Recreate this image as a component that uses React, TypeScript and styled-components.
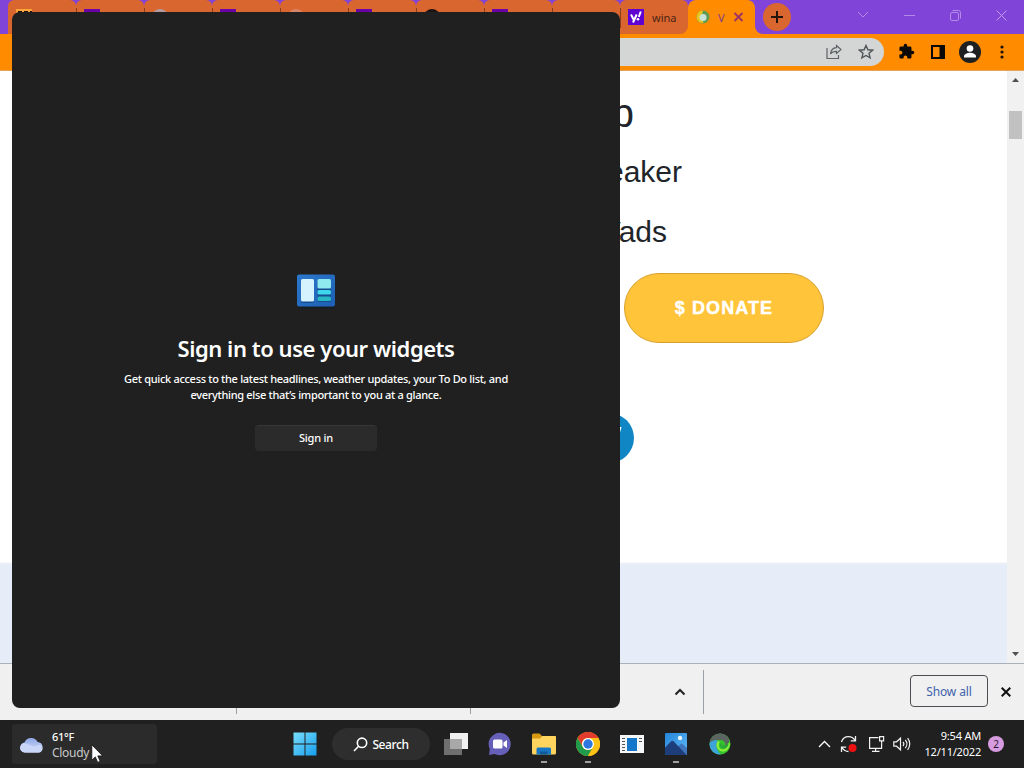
import React, {ReactNode} from 'react';
import styled, {createGlobalStyle, css} from 'styled-components';

const color = {
    frame: '#8044d8',
    tab: '#d9662f',
    toolbar: '#ff8c00',
    omnibox: '#d3d6d5',
    shelf: '#f0f0f0',
    dark: '#202020',
    darkHover: '#2b2b2b',
    band: '#e6edf8',
};

const GlobalStyle = createGlobalStyle`
    * {
        box-sizing: border-box;
    }

    body {
        margin: 0;
        overflow: hidden;
        font-family: 'Noto Sans', 'Open Sans', sans-serif;
    }

    svg {
        display: block;
        flex: none;
    }
`;

const Desktop = styled.div`
    position: relative;
    display: flex;
    flex-direction: column;
    width: 1024px;
    height: 768px;
    overflow: hidden;
    background: #fff;
`;

/* ---- browser ---- */

const TabStrip = styled.div`
    display: flex;
    flex: none;
    height: 34px;
    padding-left: 8px;
    background: ${color.frame};
`;

const Tab = styled.div<{$active?: boolean; $last?: boolean}>`
    display: flex;
    align-items: center;
    width: 68px;
    height: 34px;
    padding: 0 0 0 8px;
    border-radius: ${({$last}) => ($last ? '6px 6px 8px 0' : '6px 6px 0 0')};
    background-color: ${color.tab};
    color: #4b2413;
    font-size: 11px;

    ${({$active}) =>
        $active &&
        css`
            width: 67px;
            border-radius: 8px 8px 0 0;
            background-color: ${color.toolbar};
            color: #7d3a8c;
        `}
`;

const TabGroup = styled.div`
    display: flex;
    background: linear-gradient(${color.frame} 6px, ${color.tab} 6px, ${color.tab} 20px, ${color.toolbar} 20px);

    ${Tab} + ${Tab} {
        background-image: linear-gradient(#8a3d1c, #8a3d1c);
        background-position: 0 8px;
        background-repeat: no-repeat;
        background-size: 1px 20px;
    }
`;

const ActiveSlot = styled.div`
    background: linear-gradient(${color.frame} 16px, ${color.toolbar} 16px);
`;

const Favicon = styled.div<{$fill: string; $round?: boolean}>`
    width: 16px;
    height: 16px;
    flex: none;
    border-radius: ${({$round}) => ($round ? '50%' : '0')};
    background: ${({$fill}) => $fill};
`;

const TabTitle = styled.span`
    margin-left: 8px;
    white-space: nowrap;
`;

const StripEndBack = styled.div`
    display: flex;
    flex: 1;
    background: ${color.toolbar};
`;

const StripEnd = styled.div`
    display: flex;
    flex: 1;
    align-items: center;
    padding-left: 8px;
    border-bottom-left-radius: 8px;
    background: ${color.frame};
`;

const NewTab = styled.div`
    display: grid;
    place-items: center;
    width: 28px;
    height: 28px;
    border-radius: 50%;
    background: ${color.tab};
`;

const WindowControls = styled.div`
    display: flex;
    flex: 1;
    justify-content: flex-end;
    height: 32px;
`;

const WindowButton = styled.div`
    display: grid;
    place-items: center;
    width: 46px;
    height: 28px;
`;

const Toolbar = styled.div`
    display: flex;
    flex: none;
    align-items: center;
    height: 37px;
    padding-bottom: 1px;
    border-bottom: 1px solid #e8a35a;
    background: ${color.toolbar};
`;

const Omnibox = styled.div`
    display: flex;
    align-items: center;
    justify-content: flex-end;
    gap: 16px;
    width: 784px;
    height: 28px;
    margin-left: 100px;
    padding-right: 10px;
    border-radius: 14px;
    background: ${color.omnibox};
`;

const ToolbarIcons = styled.div`
    display: flex;
    align-items: center;
    padding-left: 6px;
`;

const ToolbarSlot = styled.div`
    display: grid;
    place-items: center;
    width: 32px;
    height: 32px;
`;

const Viewport = styled.div`
    display: flex;
    flex: none;
    height: 592px;
`;

const Page = styled.main`
    flex: 1;
    background: linear-gradient(#fff 491px, #eef1f6 492px, ${color.band} 494px);
    color: #212529;
    font-family: 'Liberation Sans', Arial, sans-serif;
    overflow: hidden;
`;

const PageLine = styled.div<{$size: number; $right: number; $height: number}>`
    width: ${({$right}) => $right}px;
    height: ${({$height}) => $height}px;
    font-size: ${({$size}) => $size}px;
    line-height: ${({$height}) => $height}px;
    text-align: right;
    white-space: nowrap;
`;

const Donate = styled.div`
    display: grid;
    place-items: center;
    width: 200px;
    height: 70px;
    margin: -2px 0 70px 624px;
    border: 1px solid #d9a02c;
    border-radius: 35px;
    background: #ffc439;
    color: #fff;
    font-size: 18px;
    font-weight: bold;
    letter-spacing: 1.1px;
    -webkit-text-stroke: 0.4px #fff;
`;

const SocialCircle = styled.div`
    width: 50px;
    height: 50px;
    margin-left: 584px;
    padding: 14px 0 0 34px;
    border-radius: 50%;
    background: #1186c4;
`;

const ScrollBar = styled.div`
    display: flex;
    flex-direction: column;
    align-items: center;
    justify-content: space-between;
    width: 17px;
    padding: 7px 0;
    background: #f1f1f1;
`;

const ScrollThumb = styled.div`
    width: 13px;
    height: 28px;
    margin: 29px 0 auto 0;
    background: #c1c1c1;
`;

const DownloadShelf = styled.div`
    display: flex;
    flex: none;
    align-items: center;
    height: 57px;
    padding-right: 13px;
    border-top: 1px solid #a9b0b6;
    background: ${color.shelf};
`;

const DownloadItem = styled.div<{$width: number}>`
    display: flex;
    align-items: center;
    justify-content: flex-end;
    width: ${({$width}) => $width}px;
    height: 44px;
    margin-bottom: 1px;
    padding-right: 17px;
    border-right: 1px solid #9aa0a6;
`;

const ShowAll = styled.div`
    display: grid;
    place-items: center;
    width: 78px;
    height: 32px;
    margin: 0 13px 2px auto;
    border: 1px solid #4a4d51;
    border-radius: 4px;
    color: #3f62ab;
    font-size: 12px;
    letter-spacing: -0.1px;
`;

/* ---- widgets flyout ---- */

const WidgetPanel = styled.section`
    position: absolute;
    top: 12px;
    left: 12px;
    display: flex;
    flex-direction: column;
    align-items: center;
    width: 608px;
    height: 696px;
    padding-top: 262px;
    border-radius: 8px;
    background: ${color.dark};
    color: #fff;
`;

const WidgetTitle = styled.h1`
    margin: 16px 0 0;
    font-size: 22px;
    font-weight: 600;
    letter-spacing: -0.45px;
    line-height: 32px;
    white-space: nowrap;
`;

const WidgetText = styled.p`
    margin: 7px 0 0;
    font-size: 11px;
    font-weight: 500;
    letter-spacing: -0.31px;
    line-height: 16px;
    text-align: center;
    white-space: nowrap;
`;

const SignIn = styled.div`
    width: 122px;
    height: 26px;
    margin-top: 22px;
    border-top: 1px solid #363636;
    border-radius: 4px;
    background: #2b2b2b;
    font-size: 11px;
    font-weight: 500;
    letter-spacing: -0.2px;
    line-height: 24px;
    text-align: center;
`;

/* ---- taskbar ---- */

const TaskBar = styled.footer`
    display: flex;
    flex: none;
    align-items: center;
    height: 48px;
    padding-left: 12px;
    background: ${color.dark};
    color: #fff;
`;

const Weather = styled.div`
    display: flex;
    align-items: center;
    gap: 7px;
    width: 145px;
    height: 40px;
    padding: 1px 0 0 7px;
    border-radius: 4px;
    background: ${color.darkHover};
    font-size: 11px;
    font-weight: 500;
    letter-spacing: -0.3px;
    line-height: 16px;
`;

const Condition = styled.div`
    color: #c8c8c8;
    font-size: 12px;
    font-weight: 400;
`;

const Apps = styled.div`
    display: flex;
    align-items: center;
    margin-left: 126px;
`;

const AppSlot = styled.div<{$running?: boolean}>`
    display: grid;
    place-items: center;
    width: 44px;
    height: 48px;
    background: ${({$running}) =>
        $running ? 'linear-gradient(#a0a0a0, #a0a0a0) 50% 41px / 6px 2px no-repeat' : 'none'};
`;

const SearchPill = styled.div`
    display: flex;
    align-items: center;
    justify-content: center;
    gap: 4px;
    width: 98px;
    height: 32px;
    margin: 0 4px 0 5px;
    border-radius: 16px;
    background: #2e2e2e;
    font-size: 12px;
    font-weight: 500;
    letter-spacing: -0.4px;
`;

const Tray = styled.div`
    display: flex;
    align-items: center;
    margin-left: auto;
    padding-right: 20px;
`;

const TrayIcons = styled.div`
    display: flex;
    align-items: center;
    gap: 8px;
    margin-right: 1px;
`;

const Clock = styled.div`
    width: 69px;
    font-size: 11px;
    letter-spacing: -0.2px;
    line-height: 16px;
    text-align: right;
    white-space: nowrap;
`;

const Notifications = styled.div`
    width: 16px;
    height: 16px;
    margin-left: 7px;
    border-radius: 50%;
    background: #d79be0;
    color: #2a1a2e;
    font-size: 10px;
    line-height: 16px;
    text-align: center;
`;

const Cursor = styled.div`
    position: absolute;
    top: 744px;
    left: 91px;
`;

const Line = ({
    width,
    height = width,
    stroke = '#fff',
    weight = 1,
    children,
}: {
    width: number;
    height?: number;
    stroke?: string;
    weight?: number;
    children: ReactNode;
}) => (
    <svg width={width} height={height} fill="none" stroke={stroke} strokeWidth={weight}>
        {children}
    </svg>
);

const favicons = [
    {
        fill:
            'linear-gradient(#ffa53a 2px, transparent 2px), repeating-linear-gradient(90deg, #ffa53a 0 2px, #1c1108 2px 6px)',
    },
    {fill: '#6a00a8'},
    {fill: '#b39a9c', round: true},
    {fill: '#6a00a8'},
    {fill: '#d98468', round: true},
    {fill: '#6a00a8'},
    {fill: '#1c1410', round: true},
    {fill: '#6a00a8'},
    {fill: 'linear-gradient(60deg, transparent 4px, #231511 4px, #231511 6px, transparent 6px)'},
];

const YahooIcon = () => (
    <svg width="16" height="16">
        <rect width="16" height="16" fill="#5f01d1" />
        <path
            fill="none"
            stroke="#fff"
            strokeWidth="2"
            d="M3 5.500l2.700 5.300M8.700 5.500L5 13.500M12.800 2.500l-2 5.500"
        />
        <circle cx="10" cy="10.300" r="1.300" fill="#fff" />
    </svg>
);

const WidgetsIcon = () => (
    <svg width="40" height="42" viewBox="0 0 40 42">
        <defs>
            <linearGradient id="wbase" x1="0" y1="0" x2="1" y2="1">
                <stop offset="0" stopColor="#2b78cc" />
                <stop offset="1" stopColor="#1d5fb5" />
            </linearGradient>
        </defs>
        <rect x="2" y="4" width="37" height="31" rx="2" fill="#191d24" />
        <rect x="1" y="0.500" width="38" height="32" rx="2" fill="url(#wbase)" />
        <rect x="5" y="6" width="13" height="23" rx="1.500" fill="#154c91" />
        <rect x="5" y="5" width="13" height="22.500" rx="1.500" fill="#d5f3ff" />
        <rect x="21.500" y="6" width="13.500" height="22" rx="1.500" fill="#154c91" />
        <rect x="21.500" y="5" width="13.500" height="9.500" rx="1.500" fill="#8feaf0" />
        <rect x="21.500" y="16" width="13.500" height="4.500" rx="1.500" fill="#3fd5ea" />
        <rect x="21.500" y="22.500" width="13.500" height="4.500" rx="1.500" fill="#28b5c4" />
    </svg>
);

const CloudIcon = () => (
    <svg width="26" height="18" viewBox="0 0 26 18">
        <defs>
            <linearGradient id="cloud" x1="0" y1="0" x2="0" y2="1">
                <stop offset="0" stopColor="#8ea7e6" />
                <stop offset="1" stopColor="#d6e0fa" />
            </linearGradient>
        </defs>
        <path
            fill="url(#cloud)"
            d="M6 16.500a5 5 0 0 1-.5-9.900A7.200 7.200 0 0 1 18.600 6 5.400 5.400 0 0 1 20 16.500z"
        />
        <path
            fill="#c9d6f8"
            d="M6 16.500a4.600 4.600 0 1 1 2.500-8.200c3 .2 4 2.200 6.500 2.200s4-2 6.500-1.200A4 4 0 0 1 20 16.500z"
        />
    </svg>
);

const ChromeIcon = () => (
    <svg width="24" height="24" viewBox="0 0 24 24">
        <circle cx="12" cy="12" r="12" fill="#fbc116" />
        <path fill="#e33b2e" d="M1.600 6A12 12 0 0 1 22.400 6H12a6 6 0 0 0-5.200 9z" />
        <path fill="#219a4c" d="M1.600 6A12 12 0 0 0 12 24l5.200-9A6 6 0 0 1 6.800 15z" />
        <path fill="#fbc116" d="M12 24A12 12 0 0 0 22.400 6H12a6 6 0 0 1 5.200 9z" />
        <circle cx="12" cy="12" r="6" fill="#fff" />
        <circle cx="12" cy="12" r="4.700" fill="#2f77e0" />
    </svg>
);

const FolderIcon = () => (
    <svg width="24" height="24" viewBox="0 0 24 24">
        <path fill="#d99a13" d="M0 3a1.500 1.500 0 0 1 1.500-1.500h6L10 4H24v8H0z" />
        <path
            fill="#ffd45e"
            d="M0 6.500h8L10.500 4H22.500A1.500 1.500 0 0 1 24 5.500V21a1.500 1.500 0 0 1-1.500 1.500h-21A1.500 1.500 0 0 1 0 21z"
        />
        <path fill="#1877c4" d="M4.500 22.500V17A1.500 1.500 0 0 1 6 15.500h11.500A1.500 1.500 0 0 1 19 17v5.500z" />
        <path fill="#11599a" d="M8 22.500v-3h7.500v3z" />
    </svg>
);

const PhotosIcon = () => (
    <svg width="24" height="24" viewBox="0 0 24 24">
        <defs>
            <linearGradient id="sky" x1="0" y1="0" x2="1" y2="1">
                <stop offset="0" stopColor="#2386dc" />
                <stop offset="1" stopColor="#65b9f3" />
            </linearGradient>
        </defs>
        <rect x="1" y="1" width="22" height="22" rx="1" fill="url(#sky)" />
        <path fill="#3f75bd" d="M12 16l4.500-4a1.500 1.500 0 0 1 2 0l4.500 4v6a1 1 0 0 1-1 1h-7z" />
        <path fill="#1d3d7b" d="M1 15.500l6-6a2 2 0 0 1 2.800 0L22.500 23H2a1 1 0 0 1-1-1z" />
        <circle cx="16" cy="6" r="2.200" fill="#e9f7ff" />
    </svg>
);

const SwirlIcon = () => (
    <svg width="22" height="22" viewBox="0 0 22 22">
        <circle cx="11" cy="11" r="10.500" fill="#35c32c" />
        <path fill="#3da3d8" d="M.5 11C1 7 6 6 9 8c-3 3-2 9 3 13.400C5.500 22 .5 17 .5 11z" />
        <path
            fill="#5c6660"
            d="M.6 9.500C1.600 3.500 7-.3 13 .8c3.500.7 5.500 2.500 6.800 4.700C21 9 19 13 15.500 13.500c2-3.500-.5-6.500-4-6.500C7.500 7 4 6.500.6 9.500z"
        />
        <path
            fill="none"
            stroke="#8fef3a"
            strokeWidth="2"
            d="M10 8.500c-3 3.500-1 8.500 3.500 9 4 .3 6.500-3.500 6.500-7.500"
        />
        <path fill="#2aa83a" d="M11.500 10c-1.500 3 .5 5.500 3.500 5.500s5-3 4.500-6.500c-1.500 4-6 5.500-8 1z" />
    </svg>
);

const SyncIcon = () => (
    <svg width="19" height="20" fill="none" stroke="#f2f2f2" strokeWidth="1.300">
        <path d="M2.500 8C3.500 4.500 6.500 2.700 9.500 2.700c3 0 5 1.300 6.500 3.800M16.500 2v4.800h-4.700" />
        <path d="M9.500 17.500c-2.800 0-4.800-1.200-6.500-4M2.500 18v-4.800h4.700" />
        <circle cx="13.500" cy="14" r="4" fill="#ee1111" stroke="none" />
    </svg>
);

const NetworkIcon = () => (
    <svg width="19" height="20" fill="none" stroke="#f2f2f2" strokeWidth="1.200">
        <path d="M12.500 3.600H3.600v10.800h12V9.500M9.600 14.500v3M6 17.400h7.500" />
        <path d="M13.600 2.600h4v4.200h-4zM15.600 6.800v3" />
    </svg>
);

const VolumeIcon = () => (
    <svg width="18" height="20" fill="none" stroke="#f2f2f2" strokeWidth="1.200">
        <path d="M.8 7.800v4.400h2.700l4 3.600V4.200l-4 3.600z" />
        <path d="M10 8a3 3 0 0 1 0 4M12.300 6a6 6 0 0 1 0 8M14.600 4.200a9 9 0 0 1 0 11.600" />
    </svg>
);

const Browser = () => (
    <>
        <TabStrip>
            <TabGroup>
                {favicons.map(({fill, round}, i) => (
                    <Tab key={i}>
                        <Favicon $fill={fill} $round={round} />
                    </Tab>
                ))}
                <Tab $last>
                    <YahooIcon />
                    <TabTitle>wina</TabTitle>
                </Tab>
            </TabGroup>
            <ActiveSlot>
                <Tab $active>
                    <svg width="14" height="14" viewBox="0 0 14 14">
                        <circle cx="7" cy="7" r="6.500" fill="#5f9b56" />
                        <path fill="#e8c51f" d="M2 11A6.500 6.500 0 0 1 7 .5L5.500 7l2 6A6 6 0 0 1 2 11z" />
                        <circle cx="7" cy="7.500" r="3.500" fill="#c8e4d8" />
                    </svg>
                    <TabTitle>V</TabTitle>
                    <Line width={21} height={10} stroke="#9b3268" weight={1.8}>
                        <path d="M9.500 1l8 8M17.500 1l-8 8" />
                    </Line>
                </Tab>
            </ActiveSlot>
            <StripEndBack>
                <StripEnd>
                    <NewTab>
                        <Line width={12} stroke="#24140c" weight={2}>
                            <path d="M6 0v12M0 6h12" />
                        </Line>
                    </NewTab>
                    <WindowControls>
                        <WindowButton>
                            <Line width={12} height={8} stroke="#b58bea">
                                <path d="M1 1l5 5 5-5" />
                            </Line>
                        </WindowButton>
                        <WindowButton>
                            <Line width={11} stroke="#b58bea">
                                <path d="M0 5.500h11" />
                            </Line>
                        </WindowButton>
                        <WindowButton>
                            <Line width={11} stroke="#b58bea">
                                <rect x=".5" y="2.500" width="8" height="8" rx="1.500" />
                                <path d="M2.500 .5h6a2 2 0 0 1 2 2v6" />
                            </Line>
                        </WindowButton>
                        <WindowButton>
                            <Line width={11} stroke="#c49cf0">
                                <path d="M.5 .5l10 10M10.500 .5l-10 10" />
                            </Line>
                        </WindowButton>
                    </WindowControls>
                </StripEnd>
            </StripEndBack>
        </TabStrip>
        <Toolbar>
            <Omnibox>
                <Line width={16} stroke="#5c6265" weight={1.2}>
                    <path d="M1 4v10.500h11.500V11M10.500 1.500l4.500 4-4.500 4V7.300c-3 0-4.800.8-6 2.700.3-3.500 2.500-6 6-6.300z" />
                </Line>
                <Line width={16} stroke="#4f5558" weight={1.4}>
                    <path d="M8 1.500l1.900 4.300 4.700.4-3.600 3.100 1.100 4.600L8 11.500l-4.100 2.400L5 9.300 1.400 6.200l4.700-.4z" />
                </Line>
            </Omnibox>
            <ToolbarIcons>
                <ToolbarSlot>
                    <svg width="17" height="17" viewBox="0 0 24 24">
                        <path
                            fill="#0c0a08"
                            d="M20.500 11H19V7a2 2 0 0 0-2-2h-4V3.500a2.500 2.500 0 0 0-5 0V5H4a2 2 0 0 0-2 2v3.800h1.500a2.700 2.700 0 0 1 0 5.400H2V20a2 2 0 0 0 2 2h3.800v-1.500a2.700 2.700 0 0 1 5.400 0V22H17a2 2 0 0 0 2-2v-4h1.500a2.500 2.500 0 0 0 0-5z"
                        />
                    </svg>
                </ToolbarSlot>
                <ToolbarSlot>
                    <svg width="14" height="14">
                        <path fill="#0c0a08" fillRule="evenodd" d="M0 0h14v14H0zM2 2v10h6.500V2z" />
                    </svg>
                </ToolbarSlot>
                <ToolbarSlot>
                    <svg width="22" height="22">
                        <circle cx="11" cy="11" r="11" fill="#1f2022" />
                        <circle cx="11" cy="7.500" r="3.300" fill="#fff" />
                        <path fill="#fff" d="M5 16.500v-1.200c0-2.200 3.500-3.500 6-3.500s6 1.300 6 3.500v1.200z" />
                    </svg>
                </ToolbarSlot>
                <ToolbarSlot>
                    <svg width="4" height="14" fill="#1c1206">
                        <circle cx="2" cy="2" r="1.600" />
                        <circle cx="2" cy="7" r="1.600" />
                        <circle cx="2" cy="12" r="1.600" />
                    </svg>
                </ToolbarSlot>
            </ToolbarIcons>
        </Toolbar>
        <Viewport>
            <Page>
                <PageLine $size={40} $right={634} $height={84}>
                    p
                </PageLine>
                <PageLine $size={30} $right={682} $height={34}>
                    eaker
                </PageLine>
                <PageLine $size={30} $right={667} $height={86}>
                    Vads
                </PageLine>
                <Donate>$ DONATE</Donate>
                <SocialCircle>
                    <svg width="4" height="6">
                        <path fill="#fff" d="M0 0h3.500L2 5.500H0z" />
                    </svg>
                </SocialCircle>
            </Page>
            <ScrollBar>
                <svg width="7" height="4" fill="#505050">
                    <path d="M0 4l3.500-4L7 4z" />
                </svg>
                <ScrollThumb />
                <svg width="7" height="4" fill="#505050">
                    <path d="M0 0l3.500 4L7 0z" />
                </svg>
            </ScrollBar>
        </Viewport>
        <DownloadShelf>
            <DownloadItem $width={237} />
            <DownloadItem $width={234} />
            <DownloadItem $width={233}>
                <Line width={12} height={8} stroke="#202124" weight={2}>
                    <path d="M1.500 6.500L6 2l4.500 4.500" />
                </Line>
            </DownloadItem>
            <ShowAll>Show all</ShowAll>
            <Line width={10} stroke="#111" weight={2}>
                <path d="M.7 .7l8.600 8.600M9.300 .7L.7 9.300" />
            </Line>
        </DownloadShelf>
    </>
);

const Widgets = () => (
    <WidgetPanel>
        <WidgetsIcon />
        <WidgetTitle>Sign in to use your widgets</WidgetTitle>
        <WidgetText>
            Get quick access to the latest headlines, weather updates, your To Do list, and
            <br />
            everything else that’s important to you at a glance.
        </WidgetText>
        <SignIn>Sign in</SignIn>
    </WidgetPanel>
);

const Taskbar = () => (
    <TaskBar>
        <Weather>
            <CloudIcon />
            <div>
                <div>61°F</div>
                <Condition>Cloudy</Condition>
            </div>
        </Weather>
        <Apps>
            <AppSlot>
                <svg width="24" height="24">
                    <defs>
                        <linearGradient id="win" x1="0" y1="0" x2="24" y2="24" gradientUnits="userSpaceOnUse">
                            <stop offset="0" stopColor="#7be0fb" />
                            <stop offset="1" stopColor="#149cec" />
                        </linearGradient>
                    </defs>
                    <path
                        fill="url(#win)"
                        d="M.5 .5h11v11H.5zM12.500 .5h11v11h-11zM.5 12.500h11v11H.5zM12.500 12.500h11v11h-11z"
                    />
                </svg>
            </AppSlot>
            <SearchPill>
                <Line width={15} weight={1.6}>
                    <circle cx="9" cy="5.800" r="4.700" />
                    <path d="M5.600 9.300L1 14" />
                </Line>
                Search
            </SearchPill>
            <AppSlot>
                <svg width="24" height="22">
                    <rect x="6" y="0" width="18" height="16" fill="#f0f0f0" />
                    <rect x="0" y="6" width="18" height="16" fill="#6f6f6f" />
                    <rect x="6" y="6" width="12" height="10" fill="#a8a8a8" />
                </svg>
            </AppSlot>
            <AppSlot>
                <svg width="24" height="24">
                    <path fill="#6660b8" d="M12 .8A11.200 11.200 0 1 1 6.500 22L1 23l.8-6A11.200 11.200 0 0 1 12 .8z" />
                    <rect x="5" y="7.500" width="9.500" height="9" rx="1.500" fill="#fff" />
                    <path fill="#fff" d="M15.500 10.500l3.500-2.500v8l-3.500-2.500z" />
                </svg>
            </AppSlot>
            <AppSlot $running>
                <FolderIcon />
            </AppSlot>
            <AppSlot $running>
                <ChromeIcon />
            </AppSlot>
            <AppSlot>
                <svg width="24" height="18">
                    <rect width="24" height="18" fill="#f5f7f8" />
                    <rect x="7" y="3" width="10" height="13" fill="#1477c9" />
                    <path
                        stroke="#555"
                        d="M2 3.500h3M2 6.500h3M2 9.500h3M2 12.500h3M2 15.500h3M19 3.500h3M19 6.500h3"
                    />
                </svg>
            </AppSlot>
            <AppSlot $running>
                <PhotosIcon />
            </AppSlot>
            <AppSlot>
                <SwirlIcon />
            </AppSlot>
        </Apps>
        <Tray>
            <TrayIcons>
                <Line width={13} height={8} weight={1.3}>
                    <path d="M1 7l5.500-5.500L12 7" />
                </Line>
                <SyncIcon />
                <NetworkIcon />
                <VolumeIcon />
            </TrayIcons>
            <Clock>
                9:54 AM
                <br />
                12/11/2022
            </Clock>
            <Notifications>2</Notifications>
        </Tray>
    </TaskBar>
);

const App = () => (
    <>
        <GlobalStyle />
        <Desktop>
            <Browser />
            <Taskbar />
            <Widgets />
            <Cursor>
                <svg width="13" height="20">
                    <path
                        fill="#fff"
                        stroke="#111"
                        strokeWidth=".8"
                        d="M.8 .8v15.400l3.500-3.300 2.400 5.500 2.500-1.100-2.400-5.400h4.900z"
                    />
                </svg>
            </Cursor>
        </Desktop>
    </>
);

export default App;
